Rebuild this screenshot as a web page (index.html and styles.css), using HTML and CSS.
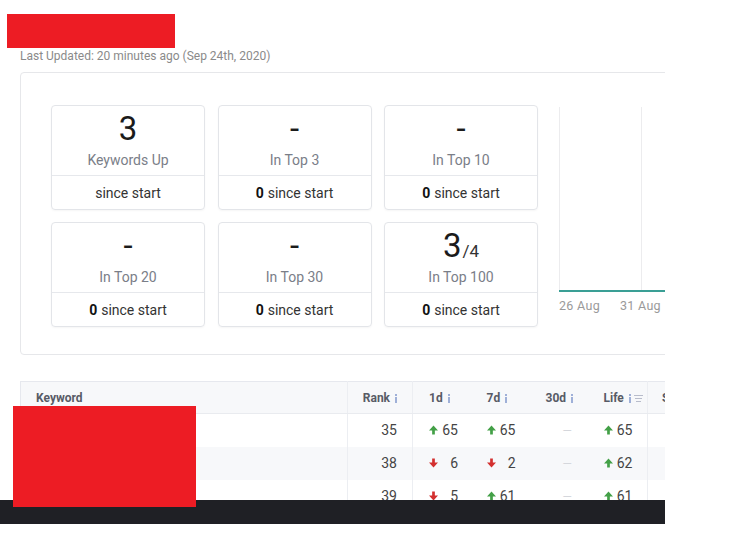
FILE: index.html
```html
<!DOCTYPE html>
<html lang="en">
<head>
<meta charset="utf-8">
<title>Rankings</title>
<link rel="stylesheet" href="styles.css">
</head>
<body>
<div class="page">
  <div class="viewport">
    <p class="updated">Last Updated: 20 minutes ago (Sep 24th, 2020)</p>
    <section class="summary">
      <div class="stats">
        <div class="stat">
          <div class="stat-top"><div class="stat-value">3</div><div class="stat-label">Keywords Up</div></div>
          <div class="stat-bottom">since start</div>
        </div>
        <div class="stat">
          <div class="stat-top"><div class="stat-value">-</div><div class="stat-label">In Top 3</div></div>
          <div class="stat-bottom"><b>0</b> since start</div>
        </div>
        <div class="stat">
          <div class="stat-top"><div class="stat-value">-</div><div class="stat-label">In Top 10</div></div>
          <div class="stat-bottom"><b>0</b> since start</div>
        </div>
        <div class="stat">
          <div class="stat-top"><div class="stat-value">-</div><div class="stat-label">In Top 20</div></div>
          <div class="stat-bottom"><b>0</b> since start</div>
        </div>
        <div class="stat">
          <div class="stat-top"><div class="stat-value">-</div><div class="stat-label">In Top 30</div></div>
          <div class="stat-bottom"><b>0</b> since start</div>
        </div>
        <div class="stat">
          <div class="stat-top"><div class="stat-value">3<span class="of">/4</span></div><div class="stat-label">In Top 100</div></div>
          <div class="stat-bottom"><b>0</b> since start</div>
        </div>
      </div>
      <div class="chart">
        <div class="plot">
          <div class="plot-col"></div>
          <div class="plot-col"></div>
        </div>
        <div class="axis">
          <span>26 Aug</span>
          <span>31 Aug</span>
        </div>
      </div>
    </section>

    <table class="kw">
      <thead>
        <tr>
          <th class="c-kw">Keyword</th>
          <th class="c-rank">Rank <svg class="info" viewBox="0 0 2 9"><rect x="0" y="0" width="2" height="2"/><rect x="0" y="3" width="2" height="6"/></svg></th>
          <th class="c-d">1d <svg class="info" viewBox="0 0 2 9"><rect x="0" y="0" width="2" height="2"/><rect x="0" y="3" width="2" height="6"/></svg></th>
          <th class="c-d">7d <svg class="info" viewBox="0 0 2 9"><rect x="0" y="0" width="2" height="2"/><rect x="0" y="3" width="2" height="6"/></svg></th>
          <th class="c-d c-30">30d <svg class="info" viewBox="0 0 2 9"><rect x="0" y="0" width="2" height="2"/><rect x="0" y="3" width="2" height="6"/></svg></th>
          <th class="c-d c-life">Life <svg class="info" viewBox="0 0 2 9"><rect x="0" y="0" width="2" height="2"/><rect x="0" y="3" width="2" height="6"/></svg><svg class="sort" viewBox="0 0 9 9"><rect x="0" y="1" width="9" height="1"/><rect x="1" y="4" width="7" height="1"/><rect x="2" y="7" width="5" height="1"/></svg></th>
          <th class="c-more">Search Vol</th>
        </tr>
      </thead>
      <tbody>
        <tr>
          <td class="c-kw"></td>
          <td class="c-rank">35</td>
          <td class="c-d"><span class="delta up"><svg class="arr" viewBox="0 0 10 10"><path d="M5 0 L10 5.5 H6.5 V10 H3.5 V5.5 H0 Z"/></svg><span class="num">65</span></span></td>
          <td class="c-d"><span class="delta up"><svg class="arr" viewBox="0 0 10 10"><path d="M5 0 L10 5.5 H6.5 V10 H3.5 V5.5 H0 Z"/></svg><span class="num">65</span></span></td>
          <td class="c-d c-30"><span class="none">—</span></td>
          <td class="c-d c-life"><span class="delta up"><svg class="arr" viewBox="0 0 10 10"><path d="M5 0 L10 5.5 H6.5 V10 H3.5 V5.5 H0 Z"/></svg><span class="num">65</span></span></td>
          <td class="c-more"></td>
        </tr>
        <tr class="alt">
          <td class="c-kw"></td>
          <td class="c-rank">38</td>
          <td class="c-d"><span class="delta down"><svg class="arr" viewBox="0 0 10 10"><path d="M5 10 L10 4.5 H6.5 V0 H3.5 V4.5 H0 Z"/></svg><span class="num">6</span></span></td>
          <td class="c-d"><span class="delta down"><svg class="arr" viewBox="0 0 10 10"><path d="M5 10 L10 4.5 H6.5 V0 H3.5 V4.5 H0 Z"/></svg><span class="num">2</span></span></td>
          <td class="c-d c-30"><span class="none">—</span></td>
          <td class="c-d c-life"><span class="delta up"><svg class="arr" viewBox="0 0 10 10"><path d="M5 0 L10 5.5 H6.5 V10 H3.5 V5.5 H0 Z"/></svg><span class="num">62</span></span></td>
          <td class="c-more"></td>
        </tr>
        <tr>
          <td class="c-kw"></td>
          <td class="c-rank">39</td>
          <td class="c-d"><span class="delta down"><svg class="arr" viewBox="0 0 10 10"><path d="M5 10 L10 4.5 H6.5 V0 H3.5 V4.5 H0 Z"/></svg><span class="num">5</span></span></td>
          <td class="c-d"><span class="delta up"><svg class="arr" viewBox="0 0 10 10"><path d="M5 0 L10 5.5 H6.5 V10 H3.5 V5.5 H0 Z"/></svg><span class="num">61</span></span></td>
          <td class="c-d c-30"><span class="none">—</span></td>
          <td class="c-d c-life"><span class="delta up"><svg class="arr" viewBox="0 0 10 10"><path d="M5 0 L10 5.5 H6.5 V10 H3.5 V5.5 H0 Z"/></svg><span class="num">61</span></span></td>
          <td class="c-more"></td>
        </tr>
      </tbody>
    </table>
  </div>
  <div class="footer-bar"></div>
</div>
<div class="redact redact-title"></div>
<div class="redact redact-kw"></div>
</body>
</html>
```

FILE: styles.css
```css
* { box-sizing: border-box; }
html, body { margin: 0; padding: 0; background: #fff; }
body {
  font-family: Roboto, "Liberation Sans", Arial, sans-serif;
  color: #333;
  position: relative;
  width: 740px;
  height: 548px;
  overflow: hidden;
}
.page { width: 665px; }
.viewport {
  height: 500px;
  overflow: hidden;
  position: relative;
}
.updated {
  margin: 0;
  padding: 49px 0 9px 20px;
  font-size: 12px;
  line-height: 14px;
  color: #8a8a8a;
  white-space: nowrap;
}
.summary {
  margin-left: 20px;
  width: 720px;
  height: 283px;
  border: 1px solid #e6e7ea;
  border-radius: 4px;
  padding: 32px 0 0 30px;
  display: flex;
  gap: 21px;
}
.stats {
  display: grid;
  grid-template-columns: repeat(3, 154px);
  grid-auto-rows: 105px;
  column-gap: 12.5px;
  row-gap: 12px;
  flex: none;
}
.stat {
  border: 1px solid #e3e5e9;
  border-radius: 4px;
  box-shadow: 0 1px 2px rgba(0,0,0,0.04);
  display: flex;
  flex-direction: column;
  text-align: center;
}
.stat-top {
  height: 70px;
  padding-top: 5px;
  border-bottom: 1px solid #e6e8ec;
}
.stat-value {
  font-size: 33px;
  line-height: 36px;
  height: 36px;
  color: #1b1b1b;
}
.stat-value .of {
  font-size: 17px;
  line-height: 0;
  color: #333;
  margin-left: 1px;
}
.stat-label {
  margin-top: 4px;
  font-size: 14px;
  line-height: 18px;
  color: #7a7e88;
}
.stat-bottom {
  flex: 1;
  display: flex;
  align-items: center;
  justify-content: center;
  font-size: 14px;
  color: #333;
  gap: 4px;
}
.stat-bottom b { font-weight: 700; color: #111; }

.chart {
  flex: none;
  width: 170px;
  display: flex;
  flex-direction: column;
}
.plot {
  height: 187px;
  display: flex;
  padding-top: 2px;
  border-bottom: 2px solid #3a9f95;
}
.plot-col {
  width: 82px;
  border-left: 1px solid #ececee;
}
.axis {
  display: flex;
  gap: 20px;
  margin-top: 7px;
  font-size: 12.5px;
  line-height: 14px;
  color: #9a9a9a;
  letter-spacing: 0.3px;
}

.kw {
  margin: 26px 0 0 20px;
  border-collapse: collapse;
  table-layout: fixed;
  width: 720px;
  border: 1px solid #e6e8ee;
  font-size: 14px;
  color: #444;
}
.kw th {
  height: 32px;
  background: #f7f8fa;
  border-bottom: 1px solid #e9ebef;
  font-size: 12px;
  font-weight: 700;
  color: #575b66;
  text-align: left;
  padding: 0;
  white-space: nowrap;
}
.kw td {
  height: 33px;
  padding: 0;
  white-space: nowrap;
}
.kw tr.alt td { background: #f7f8fa; }
.c-kw { width: 327px; padding-left: 15px !important; border-right: 1px solid #eceef2; }
.c-rank { width: 65px; text-align: right !important; padding-right: 15px !important; border-right: 1px solid #eceef2; }
.c-d { width: 58px; padding-left: 16px !important; }
.c-30 { padding-left: 17px !important; }
td.c-30 { padding-left: 34px !important; }
.c-life { width: 61px; padding-left: 17px !important; border-right: 1px solid #eceef2; }
.c-more { width: 150px; padding-left: 14px !important; }
.info {
  width: 2px;
  height: 9px;
  fill: #9fb0d8;
  margin-left: 2px;
  vertical-align: -1px;
}
.sort {
  width: 9px;
  height: 9px;
  fill: #b8bccb;
  margin-left: 3px;
  vertical-align: -1px;
}
.delta {
  display: inline-flex;
  align-items: center;
}
.arr {
  width: 9px;
  height: 10px;
  margin-right: 3px;
}
.up .arr { fill: #43a047; }
.down .arr { fill: #d3302f; }
.num {
  display: inline-block;
  width: 17px;
  text-align: right;
  color: #444;
}
.none { color: #d5d7dc; font-size: 12px; }

.footer-bar {
  height: 24px;
  background: #1f2025;
}
.redact {
  position: absolute;
  background: #ed1c24;
}
.redact-title { left: 7px; top: 14px; width: 168px; height: 34px; }
.redact-kw { left: 13px; top: 406px; width: 183px; height: 101px; }
```
